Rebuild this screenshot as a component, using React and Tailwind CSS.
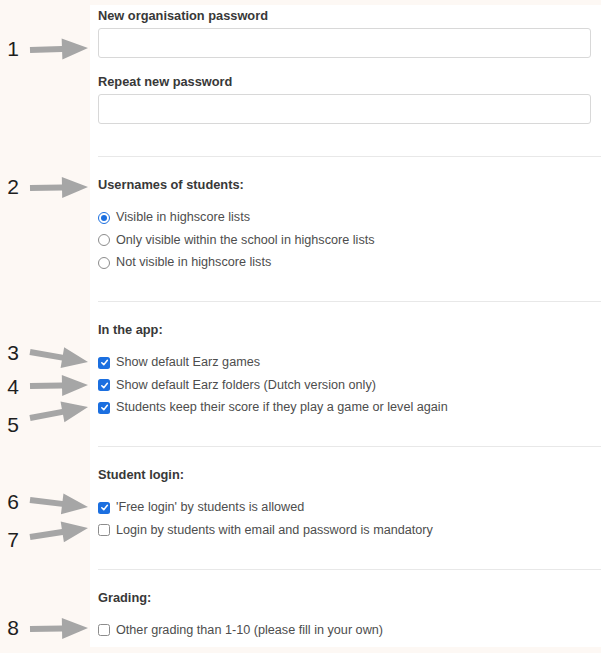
const ARROWS = [
  { n: '1', x1: 30, y1: 50, x2: 88, y2: 48, ny: 49 },
  { n: '2', x1: 30, y1: 188, x2: 88, y2: 187, ny: 187 },
  { n: '3', x1: 30, y1: 352, x2: 88, y2: 362, ny: 353 },
  { n: '4', x1: 30, y1: 386, x2: 88, y2: 385, ny: 387 },
  { n: '5', x1: 30, y1: 418, x2: 88, y2: 407, ny: 425 },
  { n: '6', x1: 30, y1: 500, x2: 88, y2: 507, ny: 502 },
  { n: '7', x1: 30, y1: 537, x2: 88, y2: 528, ny: 540 },
  { n: '8', x1: 30, y1: 629, x2: 88, y2: 628, ny: 628 },
]

function Annotations() {
  return (
    <>
      <svg className="absolute left-0 top-0" width="90" height="653">
        {ARROWS.map((a) => {
          const L = Math.hypot(a.x2 - a.x1, a.y2 - a.y1)
          const deg = (Math.atan2(a.y2 - a.y1, a.x2 - a.x1) * 180) / Math.PI
          const h = L - 26
          return (
            <polygon
              key={a.n}
              transform={`translate(${a.x1} ${a.y1}) rotate(${deg})`}
              points={`0,-3 ${h},-3 ${h},-10.5 ${L},0 ${h},10.5 ${h},3 0,3`}
              fill="#a6a6a6"
            />
          )
        })}
      </svg>
      {ARROWS.map((a) => (
        <span
          key={a.n}
          className="absolute left-[6px] w-[14px] text-center text-[21px] leading-[24px] text-[#1e1e1e]"
          style={{ top: a.ny - 12 }}
        >
          {a.n}
        </span>
      ))}
    </>
  )
}

function Checkbox({ checked }) {
  if (checked) {
    return (
      <span className="flex h-[12px] w-[12px] shrink-0 items-center justify-center rounded-[2.5px] bg-[#1b6fe0]">
        <svg width="9" height="9" viewBox="0 0 10 10">
          <path d="M2 5.3 L4.2 7.4 L8.2 2.6" fill="none" stroke="white" strokeWidth="1.7" strokeLinecap="round" strokeLinejoin="round" />
        </svg>
      </span>
    )
  }
  return <span className="h-[12px] w-[12px] shrink-0 rounded-[2.5px] border border-[#8c8c8c] bg-white" />
}

function Radio({ checked }) {
  if (checked) {
    return (
      <span className="flex h-[12px] w-[12px] shrink-0 items-center justify-center rounded-full border-[1.5px] border-[#1b6fe0] bg-white">
        <span className="h-[6px] w-[6px] rounded-full bg-[#1b6fe0]" />
      </span>
    )
  }
  return <span className="h-[12px] w-[12px] shrink-0 rounded-full border border-[#8c8c8c] bg-white" />
}

function Option({ type, checked, children }) {
  return (
    <div className="flex h-[22.5px] items-center gap-[6px] text-[12.65px] text-[#4d4d4d]">
      {type === 'radio' ? <Radio checked={checked} /> : <Checkbox checked={checked} />}
      <span>{children}</span>
    </div>
  )
}

function Section({ title, children }) {
  return (
    <div className="border-t border-[#e8e8e8] pt-[20px] pb-[27px]">
      <div className="text-[12.8px] leading-[15px] font-bold text-[#383838]">{title}</div>
      <div className="mt-[14.5px]">{children}</div>
    </div>
  )
}

export default function App() {
  return (
    <div
      className="relative h-[653px] w-[601px] overflow-hidden bg-[#fdf8f4]"
      style={{ fontFamily: '"Liberation Sans", Arial, sans-serif' }}
    >
      <Annotations />
      <div className="ml-[90px] mt-[5px] h-[642px] bg-white pl-2">
        <div className="pt-[3px] pb-[32px]">
          <div className="text-[12.8px] leading-[15px] font-bold text-[#383838]">New organisation password</div>
          <div className="mt-[5px] mr-[10px] h-[30px] rounded-[3px] border border-[#d8d8d8]" />
          <div className="mt-[16px] text-[12.8px] leading-[15px] font-bold text-[#383838]">Repeat new password</div>
          <div className="mt-[5px] mr-[10px] h-[30px] rounded-[3px] border border-[#d8d8d8]" />
        </div>

        <Section title="Usernames of students:">
          <Option type="radio" checked>Visible in highscore lists</Option>
          <Option type="radio">Only visible within the school in highscore lists</Option>
          <Option type="radio">Not visible in highscore lists</Option>
        </Section>

        <Section title="In the app:">
          <Option checked>Show default Earz games</Option>
          <Option checked>Show default Earz folders (Dutch version only)</Option>
          <Option checked>Students keep their score if they play a game or level again</Option>
        </Section>

        <Section title="Student login:">
          <Option checked>'Free login' by students is allowed</Option>
          <Option>Login by students with email and password is mandatory</Option>
        </Section>

        <Section title="Grading:">
          <Option>Other grading than 1-10 (please fill in your own)</Option>
        </Section>
      </div>
    </div>
  )
}
